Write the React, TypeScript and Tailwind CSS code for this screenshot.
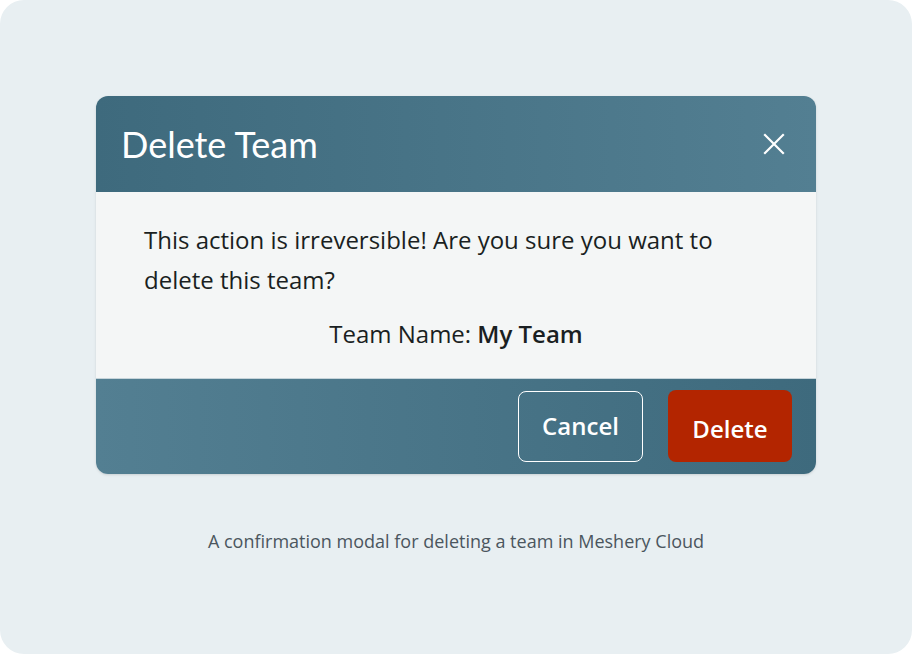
import React from 'react';

const CloseIcon: React.FC = () => (
  <svg className="w-[24px] h-[24px]" viewBox="0 0 24 24" fill="none" stroke="currentColor" strokeWidth={2.2} strokeLinecap="square">
    <path d="M3 3L21 21M21 3L3 21" />
  </svg>
);

const App: React.FC = () => {
  return (
    <div className="w-[912px] h-[654px] bg-white">
      <div className="w-full h-full rounded-[24px] bg-[#e8eff2] px-[96px] pt-[96px] flex flex-col items-center font-['Open_Sans',sans-serif]">
        {/* Modal */}
        <div className="w-[720px] rounded-[12px] overflow-hidden shadow-sm">
          <div className="h-[96px] flex items-center justify-between pl-[25px] pr-[30px] bg-gradient-to-r from-[#3e6a7d] to-[#537f92] text-white">
            <h2 className="text-[36px] font-['Lato',sans-serif] font-normal">Delete Team</h2>
            <button className="text-white"><CloseIcon /></button>
          </div>

          <div className="bg-[#f4f6f6] pl-[48px] pr-[48px] pt-[28px] pb-[24px] text-[#1a1f22] text-[24px]">
            <p className="leading-[40px]">This action is irreversible! Are you sure you want to delete this team?</p>
            <p className="mt-[14px] leading-[40px] text-center">
              Team Name: <span className="font-semibold">My Team</span>
            </p>
          </div>

          <div className="border-t border-[#c6d4da] bg-gradient-to-r from-[#537f92] to-[#3e6a7d] flex justify-end items-center gap-[25px] pr-[24px] pt-[11px] pb-[12px]">
            <button className="w-[125px] h-[71px] rounded-[8px] border border-white text-white text-[24px] font-semibold">Cancel</button>
            <button className="w-[124px] h-[72px] rounded-[8px] bg-[#b32500] text-white text-[24px] font-semibold pt-[6px]">Delete</button>
          </div>
        </div>

        <p className="mt-[55px] text-[18px] leading-[24px] text-[#4b565e]">A confirmation modal for deleting a team in Meshery Cloud</p>
      </div>
    </div>
  );
};

export default App;
